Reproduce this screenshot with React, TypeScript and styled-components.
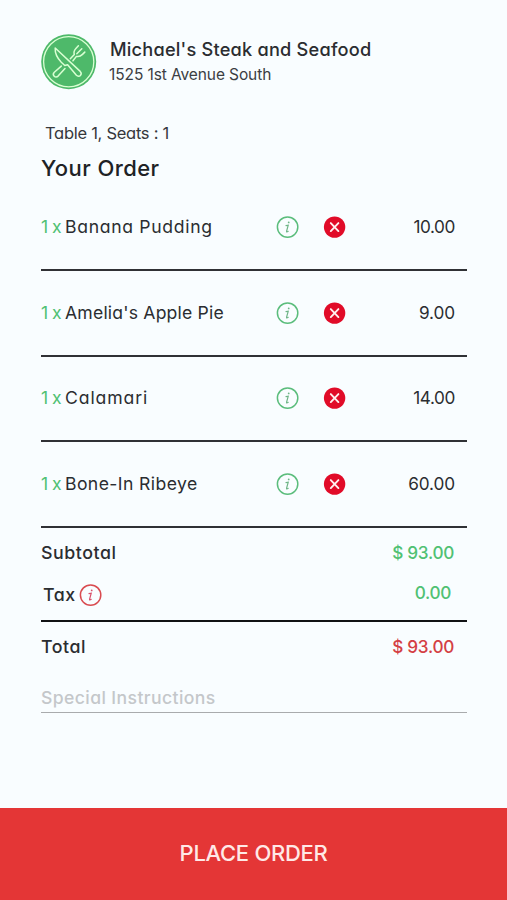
import React from "react";
import styled, { createGlobalStyle } from "styled-components";

const green = "#50c173";
const red = "#e43636";
const ink = "#2b2d31";

const GlobalStyle = createGlobalStyle`
  * { box-sizing: border-box; }
  body {
    margin: 0;
    background: #f9fdff;
    color: ${ink};
    font-family: "Inter", sans-serif;
    font-feature-settings: "cv11";
  }
`;

const Page = styled.main`
  display: flex;
  flex-direction: column;
  width: 507px;
  height: 900px;
  overflow: hidden;
`;

const Content = styled.div`
  flex: 1;
  padding: 34px 40px 0 41px;
`;

const Header = styled.header`
  display: flex;
  gap: 13px;
  height: 85px;
`;

const HeaderText = styled.div`
  padding-top: 2px;
`;

const RestaurantName = styled.h1`
  margin: 0;
  font-size: 18.2px;
  font-weight: 500;
  line-height: 26px;
  letter-spacing: 0.21px;
  white-space: nowrap;
`;

const Address = styled.p`
  margin: 0 0 0 -1px;
  font-size: 15.5px;
  line-height: 26px;
  letter-spacing: -0.1px;
  color: #3c3e43;
`;

const Seating = styled.p`
  margin: 0 0 0 4px;
  font-size: 16.5px;
  line-height: 29px;
  letter-spacing: -0.28px;
  color: #36383c;
`;

const Heading = styled.h2`
  margin: 0;
  font-size: 22px;
  font-weight: 500;
  line-height: 41px;
  letter-spacing: 0.42px;
  color: #202225;
`;

const Items = styled.ul`
  list-style: none;
  margin: -3.6px 0 0;
  padding: 0;
`;

const Item = styled.li`
  display: grid;
  grid-template-columns: 235px 47px 24px 1fr;
  align-items: center;
  height: 85.6px;
  padding: 0 12px 0 0;
  border-bottom: 2px solid #303135;
  font-size: 17.6px;
  line-height: 24px;
`;

const ItemName = styled.span<{ $tracking: number }>`
  display: flex;
  letter-spacing: ${(p) => p.$tracking}px;
  white-space: nowrap;
`;

const Quantity = styled.span`
  flex: 0 0 24px;
  letter-spacing: -0.5px;
  color: ${green};
`;

const IconButton = styled.button`
  display: flex;
  width: 24px;
  height: 24px;
  padding: 0;
  border: 0;
  background: none;
`;

const Price = styled.span<{ $tracking: number }>`
  justify-self: end;
  font-size: 17.2px;
  letter-spacing: ${(p) => p.$tracking}px;
`;

const SummaryRow = styled.div<{ $height: number }>`
  display: flex;
  align-items: center;
  justify-content: space-between;
  height: ${(p) => p.$height}px;
  padding-right: 13px;
  font-size: 17.8px;
  font-weight: 500;
  letter-spacing: 0.55px;
`;

const TaxRow = styled(SummaryRow)`
  padding: 0 16px 0 2px;
`;

const TaxLabel = styled.span`
  display: flex;
  align-items: center;
  gap: 3px;
  padding-top: 4px;
`;

const Amount = styled.span<{ $color: string }>`
  color: ${(p) => p.$color};
  font-size: 17.2px;
  letter-spacing: -0.3px;
`;

const Totals = styled.section`
  padding-top: 4px;
`;

const Charges = styled.div`
  height: 90px;
  border-bottom: 2px solid #111214;
`;

const Instructions = styled.input`
  display: block;
  width: 100%;
  height: 36px;
  margin-top: 6px;
  padding: 6px 0 0;
  border: 0;
  border-bottom: 1.5px solid #a9abad;
  outline: 0;
  background: none;
  font: 500 17.6px "Inter", sans-serif;
  font-feature-settings: "cv11";
  letter-spacing: 0.4px;
  &::placeholder { color: #c4c7ca; opacity: 1; }
`;

const PlaceOrder = styled.button`
  flex: 0 0 92.5px;
  padding: 0 0 1px;
  border: 0;
  background: ${red};
  color: #ffe9e7;
  font: 500 22px "Inter", sans-serif;
  letter-spacing: -0.3px;
`;

function Logo() {
  return (
    <svg width="56" height="56" viewBox="0 0 56 56" fill="none" stroke="#d9ffd2" strokeLinecap="round" strokeLinejoin="round">
      <circle cx="27.7" cy="27.7" r="27.5" fill="#4eb96a" stroke="none" />
      <circle cx="27.7" cy="27.7" r="25.1" strokeWidth="1.3" />
      <g strokeWidth="1.5">
        <path d="M14.2 14c-.3 4.5 2 10 6.1 14.2l3.5 3.3 2.8-.8 8.8 10.5c1.2 1.2 3 1.3 4 .2s1-2.7-.2-4z" />
        <path d="M24 34.5l-6.9 7.6c-1.2 1.2-2.8 1.2-3.9.1s-1-2.8.1-3.9l7-6.2" />
        <path d="M29.3 24.7l4-4.2c-1-3 .1-4.6 1.8-6.3l2.3-2.4M43.8 18.1l-2.3 2.3c-1.7 1.7-3.3 2.8-6.1 2l-3.4 4.4M35.8 19.8l5-5" />
      </g>
    </svg>
  );
}

function InfoIcon({ color, glyph }: { color: string; glyph: string }) {
  return (
    <svg width="24" height="24" viewBox="0 0 24 24" fill="none">
      <circle cx="11.6" cy="12.1" r="10.2" stroke={color} strokeWidth="1.5" />
      <circle cx="12.7" cy="7.4" r="0.9" fill={glyph} />
      <path d="M10 10.7l2.2-.5-1.6 6c-.2 1 .4 1 1.6.1" stroke={glyph} strokeWidth="1.2" strokeLinecap="round" />
    </svg>
  );
}

function RemoveIcon() {
  return (
    <svg width="24" height="24" viewBox="0 0 24 24">
      <circle cx="11.6" cy="12.1" r="10.7" fill="#e10b28" />
      <path d="M7.8 8.1l7.6 8M15.4 8.1L7.8 16.1" stroke="#fff0f0" strokeWidth="1.9" strokeLinecap="round" />
    </svg>
  );
}

const items = [
  { name: "Banana Pudding", price: "10.00", tracking: 0.68, priceTracking: -0.4 },
  { name: "Amelia's Apple Pie", price: "9.00", tracking: 0.19, priceTracking: -0.1 },
  { name: "Calamari", price: "14.00", tracking: 0.9, priceTracking: -0.4 },
  { name: "Bone-In Ribeye", price: "60.00", tracking: 0.4, priceTracking: -0.1 },
];

export default function App() {
  return (
    <>
      <GlobalStyle />
      <Page>
        <Content>
          <Header>
            <Logo />
            <HeaderText>
              <RestaurantName>Michael's Steak and Seafood</RestaurantName>
              <Address>1525 1st Avenue South</Address>
            </HeaderText>
          </Header>
          <Seating>Table 1, Seats : 1</Seating>
          <Heading>Your Order</Heading>
          <Items>
            {items.map((item) => (
              <Item key={item.name}>
                <ItemName $tracking={item.tracking}>
                  <Quantity>1 x</Quantity>
                  {item.name}
                </ItemName>
                <IconButton aria-label="Item details">
                  <InfoIcon color="#5bbd7c" glyph="#6fb587" />
                </IconButton>
                <IconButton aria-label="Remove item">
                  <RemoveIcon />
                </IconButton>
                <Price $tracking={item.priceTracking}>{item.price}</Price>
              </Item>
            ))}
          </Items>
          <Totals>
            <Charges>
              <SummaryRow $height={42}>
                <span>Subtotal</span>
                <Amount $color={green}>$ 93.00</Amount>
              </SummaryRow>
              <TaxRow $height={38}>
                <TaxLabel>
                  Tax
                  <InfoIcon color="#d94b50" glyph="#d8506b" />
                </TaxLabel>
                <Amount $color={green}>0.00</Amount>
              </TaxRow>
            </Charges>
            <SummaryRow $height={49}>
              <span>Total</span>
              <Amount $color="#d43f44">$ 93.00</Amount>
            </SummaryRow>
            <Instructions placeholder="Special Instructions" />
          </Totals>
        </Content>
        <PlaceOrder>PLACE ORDER</PlaceOrder>
      </Page>
    </>
  );
}
